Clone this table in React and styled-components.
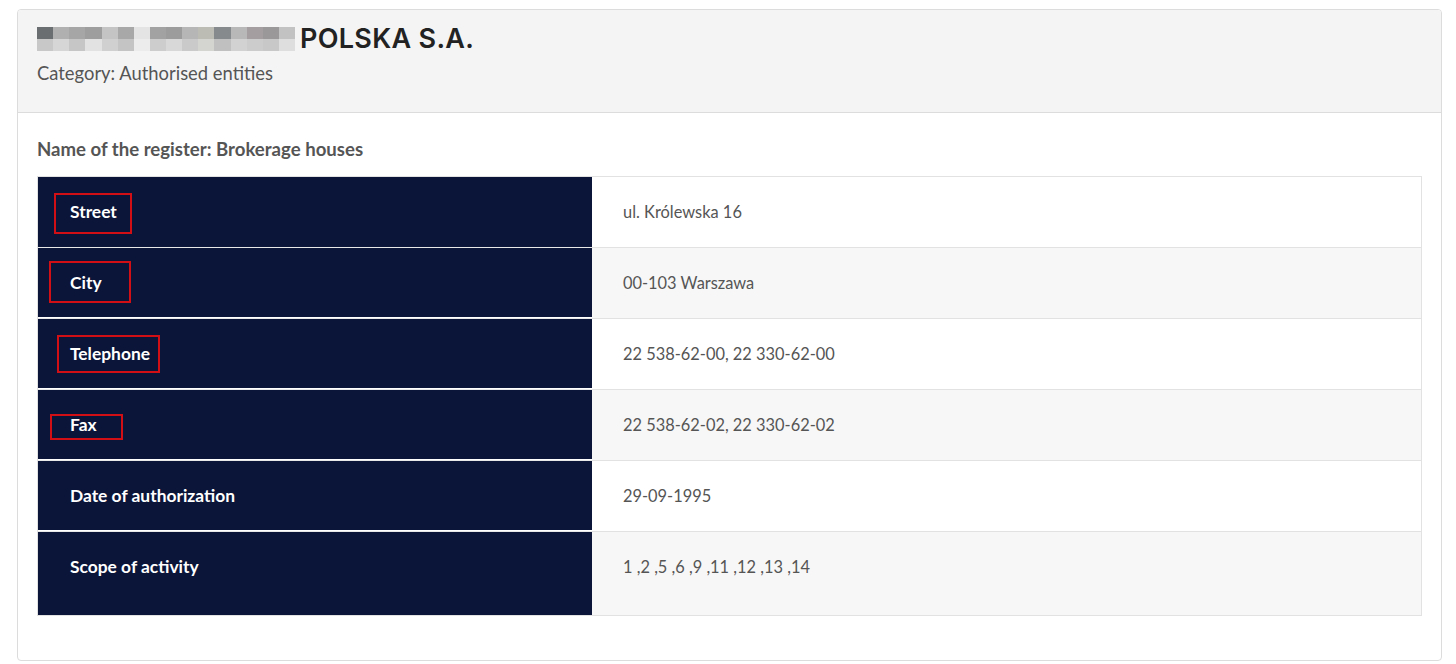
import React from "react";
import styled, { createGlobalStyle } from "styled-components";

const Global = createGlobalStyle`
  html, body { margin: 0; padding: 0; background: #fff; }
  body { font-family: Lato, "Open Sans", sans-serif; }
`;

const Page = styled.div`
  padding: 9px 14px 4px 17px;
`;

const Card = styled.div`
  border: 1px solid #dcdcdc;
  border-radius: 4px;
  background: #fff;
  overflow: hidden;
`;

const Header = styled.div`
  background: #f4f4f4;
  border-bottom: 1px solid #dcdcdc;
  padding: 14px 20px 0 19px;
  height: 88px;
`;

const TitleRow = styled.h1`
  margin: 0;
  display: flex;
  align-items: center;
  gap: 5px;
  font-family: Inter, "Open Sans", sans-serif;
  font-weight: 600;
  font-size: 27px;
  letter-spacing: 0.3px;
  color: #222;
  line-height: 30px;
`;

const Blur = styled.span`
  display: grid;
  grid-template-columns: repeat(${(p) => p.cols}, 1fr);
  width: 258px;
  height: 24px;
`;

const Px = styled.span`
  background: ${(p) => p.c};
`;

const Category = styled.div`
  margin-top: 8px;
  font-size: 18.4px;
  color: #555;
`;

const Body = styled.div`
  padding: 25px 19px 44px 19px;
`;

const RegisterName = styled.div`
  font-weight: 700;
  font-size: 18.6px;
  line-height: 22px;
  color: #555;
  margin-bottom: 16px;
`;

const Table = styled.div`
  display: grid;
  grid-template-columns: 554px 1fr;
  border: 1px solid #e2e2e2;
`;

const Label = styled.div`
  background: #0b1539;
  color: #fff;
  font-weight: 700;
  font-size: 17.4px;
  padding: 25px 32px ${(p) => (p.$last ? "38px" : "25px")};
  height: ${(p) => (p.$last ? "84px" : "70px")};
  box-sizing: border-box;
  line-height: 20px;
  border-top: ${(p) => (p.$first ? "none" : "1px solid #e8e8e8")};
`;

const Value = styled.div`
  background: ${(p) => (p.$alt ? "#f7f7f7" : "#fff")};
  color: #555;
  font-size: 16.4px;
  padding: 25px 30px 25px 31px;
  line-height: 20px;
  box-sizing: border-box;
  border-top: ${(p) => (p.$first ? "none" : "1px solid #e2e2e2")};
`;

const Mark = styled.span`
  position: relative;
  display: inline-block;
`;

const Box = styled.span`
  position: absolute;
  left: ${(p) => p.$l}px;
  top: ${(p) => p.$t}px;
  width: ${(p) => p.$w}px;
  height: ${(p) => p.$h}px;
  border: 2px solid #d20f14;
  box-sizing: border-box;
`;

const blurCols = [
  "#6a6e70", "#b0b0b0", "#a6a6a6", "#9e9e9e", "#c4c4c4", "#a8a8a8", "#e4e4e4",
  "#a2a2a2", "#9c9c9c", "#b6b6b6", "#bcbcb4", "#868a8c", "#b8b8b8", "#a49ea0",
  "#9a9898", "#c2c2c2",
];
const blurCols2 = [
  "#c8c8c8", "#d6d6d6", "#c6c6c6", "#e2e2e2", "#d0d0d0", "#c4c4c4", "#ececec",
  "#cdcdcd", "#d8d8d8", "#cacaca", "#d4d4d0", "#c0c0c0", "#d2d2d2", "#cccccc",
  "#c8c8c8", "#dedede",
];

const rows = [
  ["Street", "ul. Królewska 16", { l: -16, t: -9, w: 78, h: 41 }],
  ["City", "00-103 Warszawa", { l: -21, t: -12, w: 82, h: 42 }],
  ["Telephone", "22 538-62-00, 22 330-62-00", { l: -13, t: -9, w: 103, h: 38 }],
  ["Fax", "22 538-62-02, 22 330-62-02", { l: -20, t: -1, w: 73, h: 26 }],
  ["Date of authorization", "29-09-1995"],
  ["Scope of activity", "1 ,2 ,5 ,6 ,9 ,11 ,12 ,13 ,14"],
];

export default function App() {
  return (
    <>
      <Global />
      <Page>
        <Card>
          <Header>
            <TitleRow>
              <Blur cols={16}>
                {blurCols.map((c, i) => (
                  <Px key={"a" + i} c={c} />
                ))}
                {blurCols2.map((c, i) => (
                  <Px key={"b" + i} c={c} />
                ))}
              </Blur>
              POLSKA S.A.
            </TitleRow>
            <Category>Category: Authorised entities</Category>
          </Header>
          <Body>
            <RegisterName>Name of the register: Brokerage houses</RegisterName>
            <Table>
              {rows.map(([label, value, box], i) => (
                <React.Fragment key={label}>
                  <Label $first={i === 0} $last={i === rows.length - 1}>
                    {box ? (
                      <Mark>
                        {label}
                        <Box $l={box.l} $t={box.t} $w={box.w} $h={box.h} />
                      </Mark>
                    ) : (
                      label
                    )}
                  </Label>
                  <Value $first={i === 0} $alt={i % 2 === 1}>
                    {value}
                  </Value>
                </React.Fragment>
              ))}
            </Table>
          </Body>
        </Card>
      </Page>
    </>
  );
}
